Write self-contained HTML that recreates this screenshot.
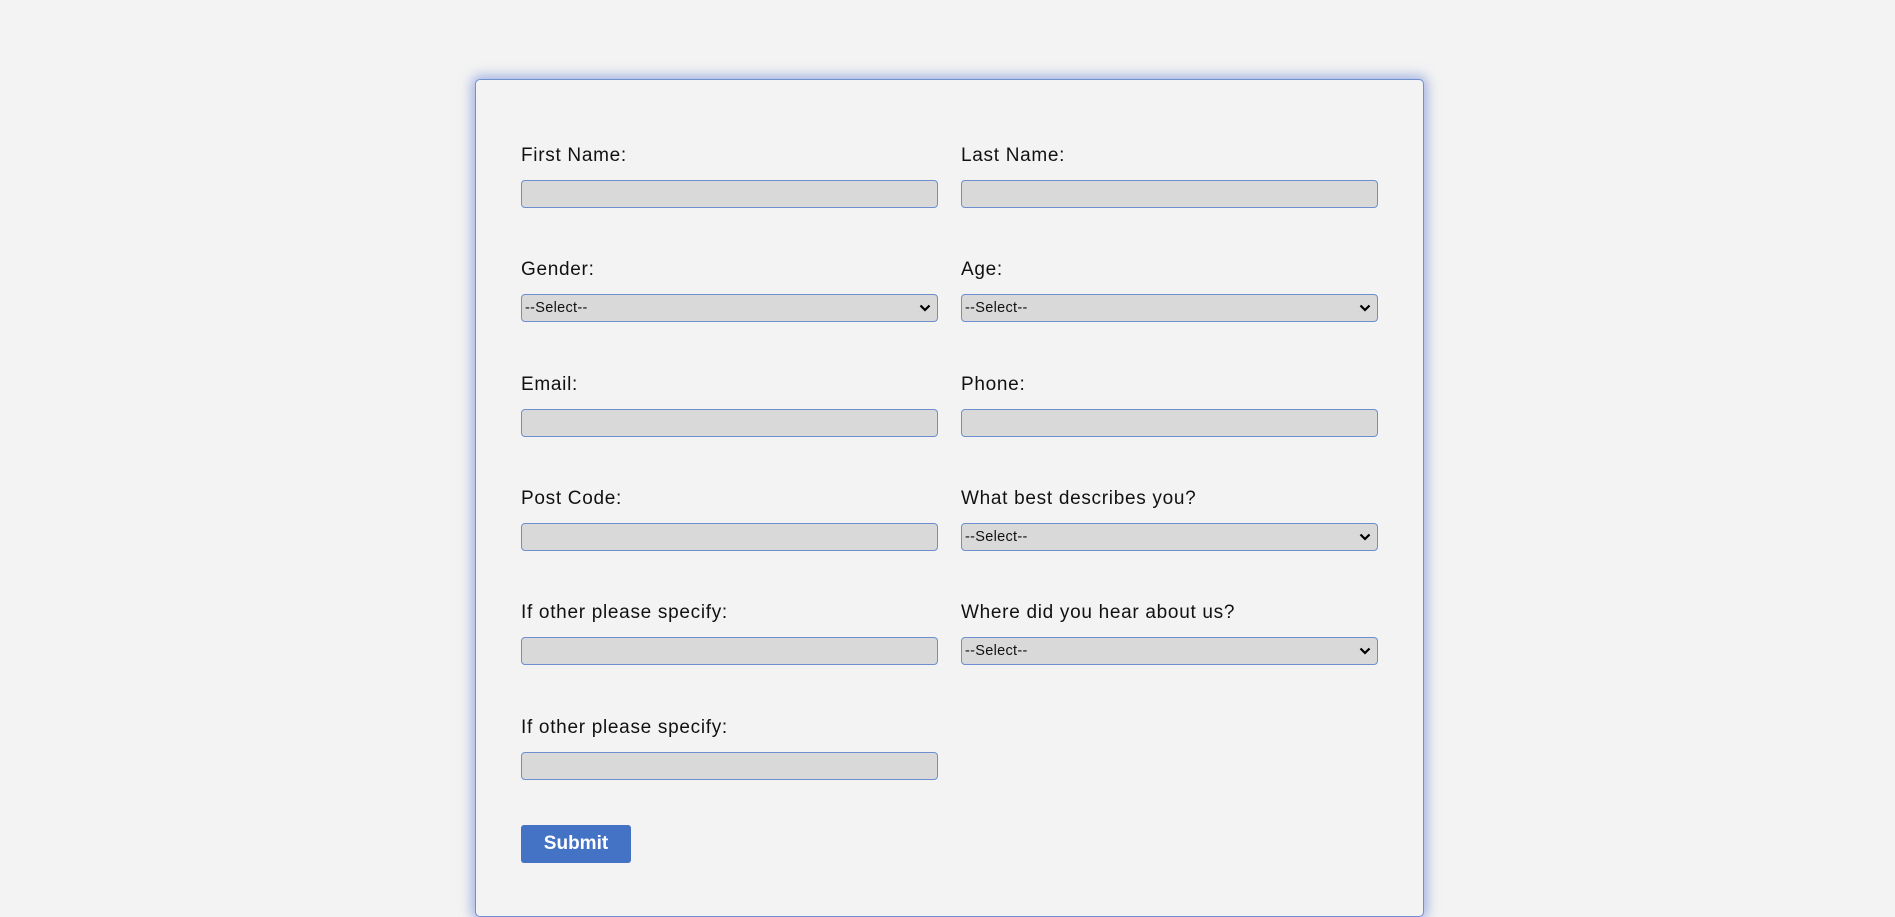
<!DOCTYPE html>
<html><head><meta charset="utf-8"><style>
html,body{margin:0;padding:0;background:#f3f3f3;width:1895px;height:916px;overflow:hidden;font-family:"Liberation Sans",sans-serif;color:#111}
.card{position:absolute;left:475px;top:79px;width:947px;height:836px;border:1.5px solid #7190d0;border-radius:5px;box-shadow:0 0 12px 3px rgba(90,120,210,0.55);background:#f3f3f3}
.l{position:absolute;font-size:19px;line-height:20px;letter-spacing:0.7px;color:#111}
.i{position:absolute;width:415px;height:26px;background:#d9d9d9;border:1px solid #6d8fcf;border-radius:4px}
.s{font-size:14.5px;line-height:26px;padding-left:3px;box-sizing:content-box;width:412px;letter-spacing:0.3px}
.s svg{position:absolute;right:6px;top:9px}
.btn{position:absolute;left:521px;top:825px;width:110px;height:38px;background:#4472c4;border-radius:3px;color:#fff;font-weight:bold;font-size:19px;line-height:38px;text-align:center}
</style></head><body>
<div class="card"></div>

<div class="l" style="left:521px;top:146px">First Name:</div>
<div class="l" style="left:961px;top:146px">Last Name:</div>
<div class="i" style="left:521px;top:180px"></div>
<div class="i" style="left:961px;top:180px"></div>

<div class="l" style="left:521px;top:260px">Gender:</div>
<div class="l" style="left:961px;top:260px">Age:</div>
<div class="i s" style="left:521px;top:294px">--Select--<svg width="12" height="8" viewBox="0 0 12 8"><path d="M1.5 1.5L6 6L10.5 1.5" stroke="#000" stroke-width="2.2" fill="none"/></svg></div>
<div class="i s" style="left:961px;top:294px">--Select--<svg width="12" height="8" viewBox="0 0 12 8"><path d="M1.5 1.5L6 6L10.5 1.5" stroke="#000" stroke-width="2.2" fill="none"/></svg></div>

<div class="l" style="left:521px;top:375px">Email:</div>
<div class="l" style="left:961px;top:375px">Phone:</div>
<div class="i" style="left:521px;top:409px"></div>
<div class="i" style="left:961px;top:409px"></div>

<div class="l" style="left:521px;top:489px">Post Code:</div>
<div class="l" style="left:961px;top:489px">What best describes you?</div>
<div class="i" style="left:521px;top:523px"></div>
<div class="i s" style="left:961px;top:523px">--Select--<svg width="12" height="8" viewBox="0 0 12 8"><path d="M1.5 1.5L6 6L10.5 1.5" stroke="#000" stroke-width="2.2" fill="none"/></svg></div>

<div class="l" style="left:521px;top:603px">If other please specify:</div>
<div class="l" style="left:961px;top:603px">Where did you hear about us?</div>
<div class="i" style="left:521px;top:637px"></div>
<div class="i s" style="left:961px;top:637px">--Select--<svg width="12" height="8" viewBox="0 0 12 8"><path d="M1.5 1.5L6 6L10.5 1.5" stroke="#000" stroke-width="2.2" fill="none"/></svg></div>

<div class="l" style="left:521px;top:718px">If other please specify:</div>
<div class="i" style="left:521px;top:752px"></div>

<div class="btn">Submit</div>
</body></html>
